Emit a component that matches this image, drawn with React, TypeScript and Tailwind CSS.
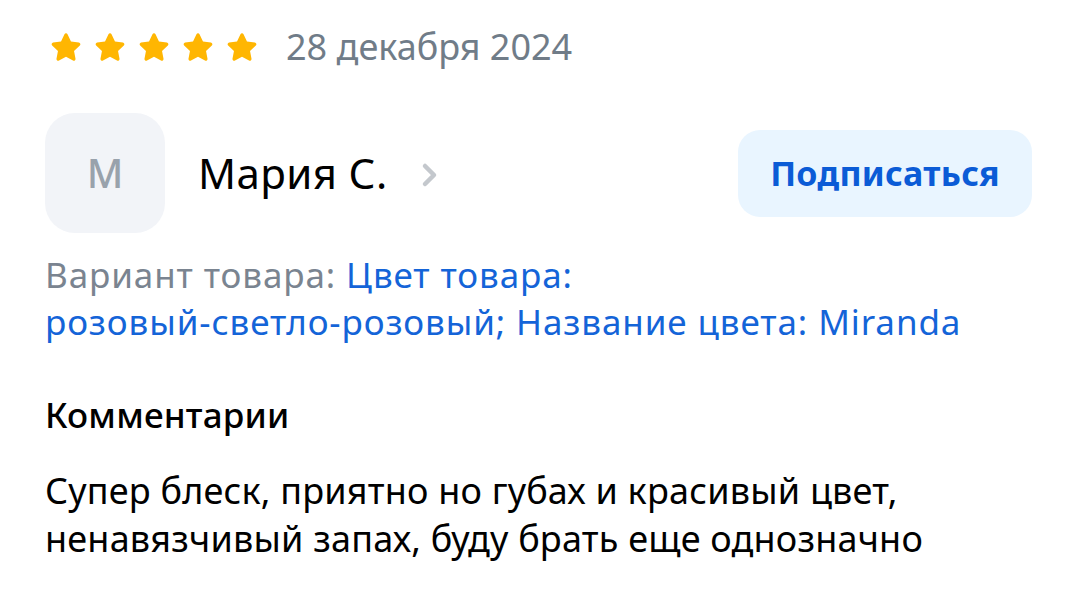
import React from "react"

function Star() {
    return (
        <svg width="36" height="35" viewBox="0 0 24 24" className="block">
            <path
                d="M12 2.2c.45 0 .86.26 1.05.67l2.36 4.97 5.42.7c.45.06.83.38.97.81.14.43.02.91-.31 1.22l-3.98 3.77 1.01 5.38c.08.45-.1.9-.47 1.17-.37.27-.86.3-1.26.08L12 18.35l-4.79 2.62c-.4.22-.89.19-1.26-.08-.37-.27-.55-.72-.47-1.17l1.01-5.38-3.98-3.77c-.33-.31-.45-.79-.31-1.22.14-.43.52-.75.97-.81l5.42-.7 2.36-4.97c.19-.41.6-.67 1.05-.67z"
                fill="#FFB602"
            />
        </svg>
    )
}

export default function App() {
    return (
        <main
            className="w-[1077px] h-[606px] bg-white overflow-hidden pl-[45px] pr-[45px] pt-[27px]"
            style={{ fontFamily: "'Noto Sans', 'Open Sans', sans-serif" }}
        >
            {/* Rating + date */}
            <div className="flex items-center h-[40px]">
                <div className="flex items-center gap-[8px] ml-[3px]">
                    <Star />
                    <Star />
                    <Star />
                    <Star />
                    <Star />
                </div>
                <span className="ml-[26px] text-[36px] leading-none text-[#707c88]">
                    28 декабря 2024
                </span>
            </div>

            {/* Author row */}
            <div className="flex items-center justify-between mt-[46px]">
                <div className="flex items-center">
                    <div className="w-[120px] h-[120px] rounded-[30px] bg-[#f2f4f8] flex items-center justify-center">
                        <span className="text-[40px] font-medium text-[#99a2ac]">М</span>
                    </div>
                    <span className="ml-[33px] text-[42px] leading-none text-black tracking-[0.4px]">
                        Мария С.
                    </span>
                    <svg width="22" height="26" viewBox="0 0 22 26" className="ml-[31px] mt-[4px]">
                        <path
                            d="M6 4l9 9-9 9"
                            fill="none"
                            stroke="#c4c8cd"
                            strokeWidth="4.5"
                            strokeLinecap="round"
                            strokeLinejoin="round"
                        />
                    </svg>
                </div>
                <button className="w-[294px] h-[87px] rounded-[22px] bg-[#e9f5ff] text-[#0b5bd6] text-[34px] font-bold tracking-[0.3px]">
                    Подписаться
                </button>
            </div>

            {/* Variant */}
            <p className="mt-[18px] text-[35px] leading-[47px] tracking-[0.9px]">
                <span className="text-[#7a8490]">Вариант товара: </span>
                <span className="text-[#1464d8]">
                    Цвет товара:
                    <br />
                    розовый-светло-розовый; Название цвета: Miranda
                </span>
            </p>

            {/* Comment */}
            <h2 className="mt-[52px] text-[35px] leading-none font-medium text-black tracking-[0.2px]">
                Комментарии
            </h2>
            <p className="mt-[35px] text-[36px] leading-[48px] text-black tracking-[0.2px]">
                Супер блеск, приятно но губах и красивый цвет,
                <br />
                ненавязчивый запах, буду брать еще однозначно
            </p>
        </main>
    )
}
